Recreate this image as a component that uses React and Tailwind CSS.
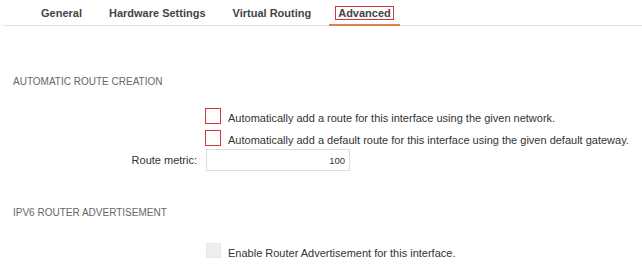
import React from "react";

const tabs = ["General", "Hardware Settings", "Virtual Routing", "Advanced"];

const RedBox = () => (
  <span className="inline-block w-[16px] h-[16px] shrink-0 border-[1.5px] border-[#d6333b] bg-white" />
);

const CheckRow = ({ children, disabled, className = "" }) => (
  <div className={`flex items-start ${className}`}>
    <div className="w-[205px] shrink-0" />
    {disabled ? (
      <span className="inline-block w-[15px] h-[15px] shrink-0 border border-[#e6e6e6] bg-[#eeeeee] ml-[1px]" />
    ) : (
      <RedBox />
    )}
    <span className="ml-[7px] mt-[3px] text-[11px] leading-[14px] text-[#333]">{children}</span>
  </div>
);

export default function App() {
  return (
    <div className="w-[642px] h-[268px] bg-white overflow-hidden font-['Liberation_Sans',Arial,sans-serif] text-[#333]">
      {/* Tabs */}
      <div className="ml-[3px] flex gap-[9px] pl-[29px] border-b border-[#e4e4e4]">
        {tabs.map((t) => {
          const active = t === "Advanced";
          return (
            <div
              key={t}
              className={`-mb-px px-[9px] pt-[6px] pb-[4px] text-[11px] leading-[14px] font-bold text-[#444] border-b-2 ${
                active ? "border-[#d9834e]" : "border-transparent"
              }`}
            >
              {active ? (
                <span className="-mx-[3px] px-[2px] border border-[#d6333b]">{t}</span>
              ) : (
                t
              )}
            </div>
          );
        })}
      </div>

      {/* Automatic route creation */}
      <div className="mt-[50px] px-[13px] text-[10px] leading-[12px] text-[#666]">
        AUTOMATIC ROUTE CREATION
      </div>
      <CheckRow className="mt-[20px]">
        Automatically add a route for this interface using the given network.
      </CheckRow>
      <CheckRow className="mt-[5px]">
        Automatically add a default route for this interface using the given default gateway.
      </CheckRow>
      <div className="mt-[2px] flex items-center">
        <label className="w-[197px] shrink-0 text-right text-[11px] leading-[14px] text-[#333]">
          Route metric:
        </label>
        <input
          type="text"
          defaultValue="100"
          className="ml-[9px] w-[144px] h-[22px] border border-[#dddddd] px-[4px] text-right text-[9.5px] text-[#333] outline-none"
        />
      </div>

      {/* IPv6 router advertisement */}
      <div className="mt-[36px] px-[13px] text-[10px] leading-[12px] text-[#666]">
        IPV6 ROUTER ADVERTISEMENT
      </div>
      <CheckRow disabled className="mt-[24px]">
        Enable Router Advertisement for this interface.
      </CheckRow>
    </div>
  );
}
